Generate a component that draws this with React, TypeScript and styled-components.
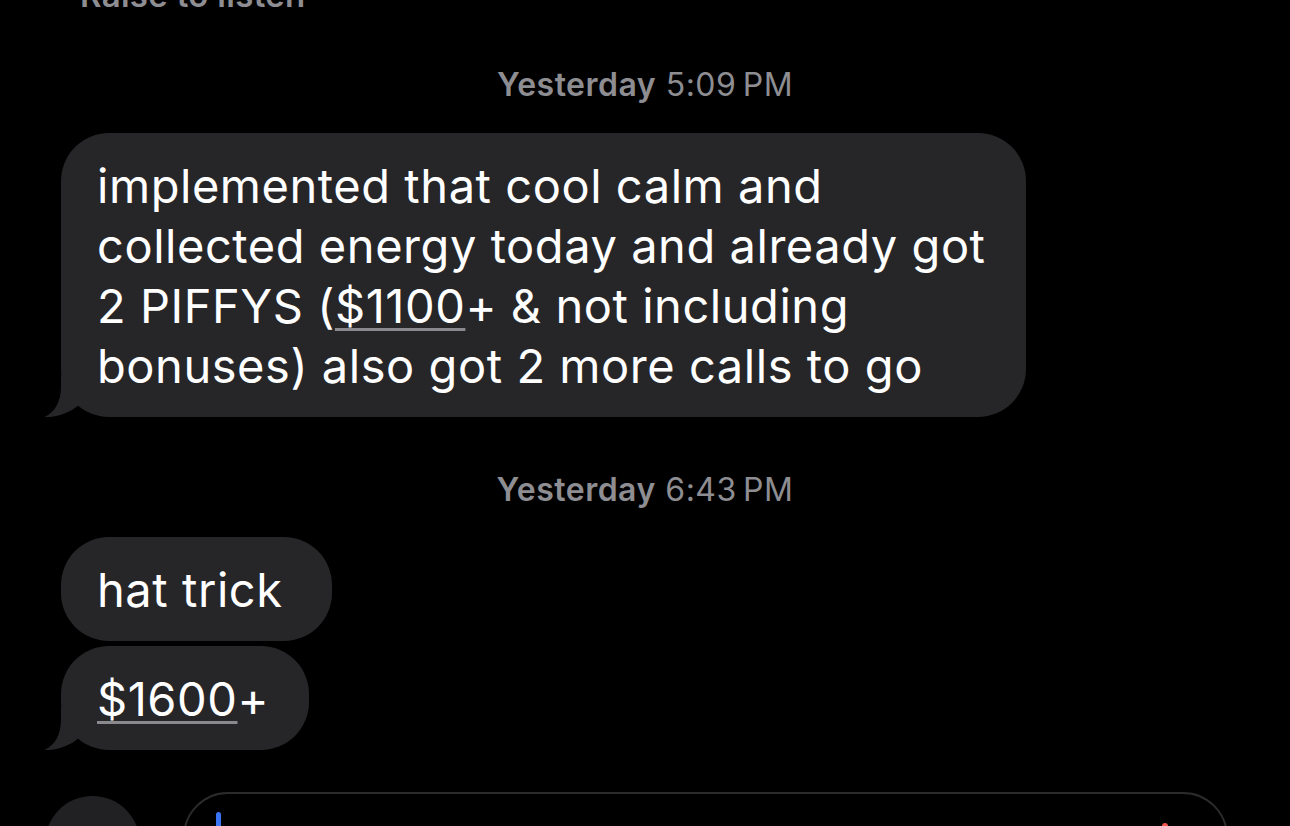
import { createGlobalStyle, styled } from 'styled-components'

const GlobalStyle = createGlobalStyle`
  html, body {
    margin: 0;
    padding: 0;
    background: #000;
    height: 826px;
    overflow: hidden;
  }
  body {
    font-family: Inter, "Noto Sans", "Liberation Sans", sans-serif;
    -webkit-font-smoothing: antialiased;
  }
`

const Screen = styled.div`
  width: 1290px;
  height: 826px;
  overflow: hidden;
  display: flex;
  flex-direction: column;
`
const RaiseHint = styled.div`
  margin-top: -25px;
  padding-left: 80px;
  font-size: 33px;
  line-height: 40px;
  font-weight: 600;
  letter-spacing: 0.3px;
  color: #8d8d92;
`
const Stamp = styled.div<{ $top: number }>`
  margin-top: ${(p) => p.$top}px;
  text-align: center;
  font-size: 32px;
  line-height: 40px;
  letter-spacing: 0.5px;
  color: #8d8d92;
  b {
    font-weight: 600;
  }
`
const Thread = styled.div<{ $top: number }>`
  margin-top: ${(p) => p.$top}px;
  padding-left: 61px;
  display: flex;
  flex-direction: column;
  align-items: flex-start;
  gap: 5px;
`
const Bubble = styled.div<{ $padRight?: number }>`
  position: relative;
  background: #262629;
  color: #fff;
  border-radius: 48px;
  padding: 23px ${(p) => p.$padRight ?? 40}px 21px 36px;
  font-size: 47px;
  line-height: 60px;
  letter-spacing: 0.55px;
  white-space: nowrap;
`
const Tail = styled.svg`
  position: absolute;
  left: -17px;
  bottom: 0;
  width: 48px;
  height: 42px;
`
const Money = styled.span`
  text-decoration: underline;
  text-decoration-color: #8a8a8e;
  text-decoration-thickness: 3px;
  text-underline-offset: 5px;
`
const InputBar = styled.div`
  margin-top: 42px;
  padding-left: 45px;
  display: flex;
  align-items: flex-start;
  gap: 43px;
`
const PlusCircle = styled.div`
  margin-top: 4px;
  width: 95px;
  height: 95px;
  border-radius: 50%;
  background: #212123;
  flex: none;
`
const Field = styled.div`
  position: relative;
  width: 1045px;
  height: 90px;
  box-sizing: border-box;
  border: 2px solid #2b2b2d;
  border-radius: 46px;
`
const Caret = styled.div`
  position: absolute;
  left: 31px;
  top: 18px;
  width: 5px;
  height: 40px;
  border-radius: 3px;
  background: #3a74f5;
`
const RedDot = styled.div`
  position: absolute;
  right: 58px;
  top: 29px;
  width: 6px;
  height: 6px;
  border-radius: 50%;
  background: #f0544a;
`

function BubbleTail() {
  return (
    <Tail viewBox="-17 -42 48 42">
      <path
        d="M0 -42 L0 -31 C0 -15 -6 -5 -16.5 0 C-6 0.5 8 -3 19 -13 L31 -13 L31 -42 Z"
        fill="#262629"
      />
    </Tail>
  )
}

export default function App() {
  return (
    <Screen>
      <GlobalStyle />
      <RaiseHint>Raise to listen</RaiseHint>

      <Stamp $top={50}>
        <b>Yesterday</b> 5:09{'\u202f'}PM
      </Stamp>
      <Thread $top={28}>
        <Bubble>
          implemented that cool calm and
          <br />
          collected energy today and already got
          <br />
          2 PIFFYS (<Money>$1100</Money>+ &amp; not including
          <br />
          bonuses) also got 2 more calls to go
          <BubbleTail />
        </Bubble>
      </Thread>

      <Stamp $top={53}>
        <b>Yesterday</b> 6:43{'\u202f'}PM
      </Stamp>
      <Thread $top={27}>
        <Bubble $padRight={49}>hat trick</Bubble>
        <Bubble>
          <Money>$1600</Money>+
          <BubbleTail />
        </Bubble>
      </Thread>

      <InputBar>
        <PlusCircle />
        <Field>
          <Caret />
          <RedDot />
        </Field>
      </InputBar>
    </Screen>
  )
}
